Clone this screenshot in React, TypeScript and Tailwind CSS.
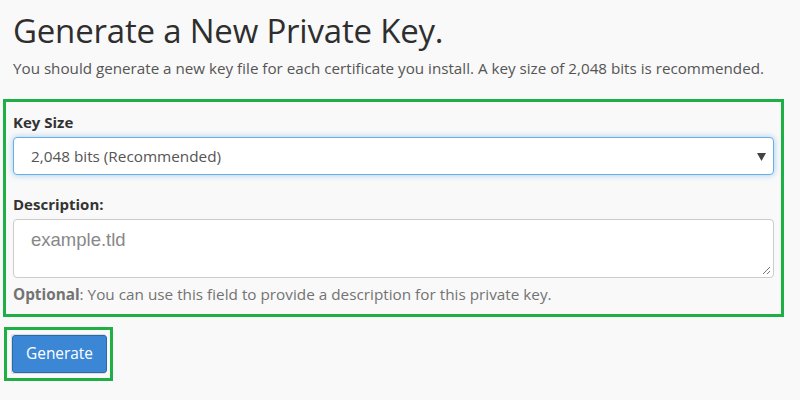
import React from "react";

export default function App() {
  return (
    <div className="w-[800px] h-[400px] bg-[#f9f9f9] overflow-hidden font-['Open_Sans',sans-serif] text-[#333]">
      <div className="pl-[13px] pt-[9px]">
        <h1 className="text-[33px] leading-[44px] font-normal tracking-[-0.2px] text-[#2e2e2e]">Generate a New Private Key.</h1>
        <p className="mt-[4px] text-[15.2px] leading-[22px] text-[#555]">
          You should generate a new key file for each certificate you install. A key size of 2,048 bits is recommended.
        </p>
      </div>
      <div className="ml-[3px] mt-[20px] w-[781px] border-[3px] border-[#1fb045] px-[7px] pt-[9px] pb-[9px]">
        <label className="block text-[15px] leading-[22px] font-bold text-[#333]">Key Size</label>
        <div className="relative mt-[4px] h-[38px] rounded-[4px] border border-[#66afe9] bg-white shadow-[0_0_6px_rgba(102,175,233,0.6)] flex items-center pl-[17px]">
          <span className="text-[15.3px] text-[#555]">2,048 bits (Recommended)</span>
          <svg className="absolute right-[7px] top-[15px]" width="9" height="8" viewBox="0 0 9 8">
            <path d="M0 0 H9 L4.5 8 Z" fill="#444" />
          </svg>
        </div>
        <label className="block mt-[18px] text-[15px] leading-[22px] font-bold text-[#333]">Description:</label>
        <div className="relative mt-[4px] h-[59px] rounded-[4px] border border-[#ccc] bg-white pl-[17px] pt-[6px]">
          <span className="text-[18.5px] font-['Liberation_Sans',Arial,sans-serif] text-[#888]">example.tld</span>
          <svg className="absolute right-[2px] bottom-[2px]" width="10" height="10" viewBox="0 0 10 10">
            <path d="M9 2 L2 9 M9 6 L6 9" stroke="#777" strokeWidth="1" />
          </svg>
        </div>
        <p className="mt-[5px] text-[15.3px] leading-[22px] text-[#737373]">
          <span className="font-bold">Optional</span>: You can use this field to provide a description for this private key.
        </p>
      </div>
      <div className="ml-[4px] mt-[10px] w-[109px] border-[3px] border-[#1fb045] p-[4px]">
        <div className="border border-[#ddd] rounded-[2px]">
          <button className="block w-[95px] h-[38px] rounded-[3px] bg-[#3b87d6] border border-[#2a6aa8] text-white text-[15.4px]">
            Generate
          </button>
        </div>
      </div>
    </div>
  );
}
